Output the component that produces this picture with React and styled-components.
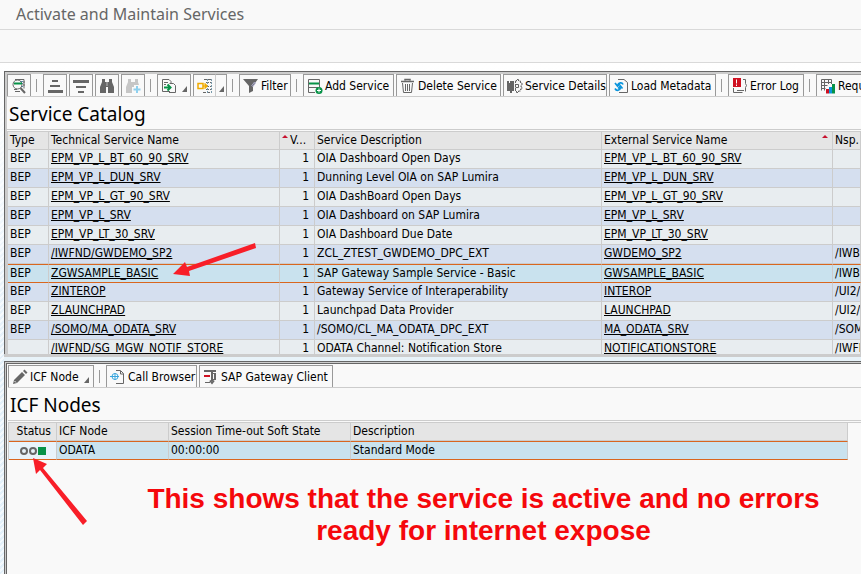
import React from "react";
import styled, { createGlobalStyle } from "styled-components";

const Global = createGlobalStyle`
  * { box-sizing: border-box; }
  body {
    margin: 0;
    background: #f9f9f9;
    color: #000;
    font-family: Tahoma, "DejaVu Sans Condensed", "Noto Sans", sans-serif;
    font-size: 12px;
    line-height: 18px;
    overflow: hidden;
  }
`;

const headingFont = `Tahoma, "Noto Sans", sans-serif`;

const Page = styled.div`
  min-height: 100vh;
  display: flex;
  flex-direction: column;
  overflow: hidden;
`;

const TitleBar = styled.header`
  height: 30px;
  padding: 0 16px;
  border-bottom: 1px solid #d9d9d9;
  h1 {
    margin: 0;
    font: 400 16px/29px ${headingFont};
    color: #666;
    white-space: nowrap;
  }
`;

const CommandBar = styled.div`
  height: 33px;
  border-bottom: 1px solid #d9d9d9;
`;

const Workspace = styled.main`
  flex: 1;
  display: flex;
  flex-direction: column;
  padding: 8px 0 0 4px;
  background:
    linear-gradient(#fff, rgba(255, 255, 255, 0) 300px),
    repeating-linear-gradient(135deg, #e3f0f9 0 2px, #f4f9fd 2px 4px);
`;

const Panel = styled.section`
  position: relative;
  border: solid #666;
  border-width: 1px 0 0 1px;
  box-shadow: inset 2px 2px 0 #ccc;
  background: #f9f9f9;
  padding: 2px 0 0 2px;
  flex: ${(p) => (p.$grow ? 1 : "none")};
  ${(p) => p.$grow && "box-shadow: inset 1px 1px 0 #ccc, inset 2px 2px 0 #666; padding: 3px 0 0 3px;"}
`;

const Splitter = styled.div`
  height: 7px;
  border-top: 3px solid #ccc;
  background: #e8f3f9;
`;

const Toolbar = styled.div`
  display: flex;
  gap: 2px;
  height: 23px;
  border-bottom: 1px solid #ccc;
  overflow: hidden;
`;

const Tool = styled.button`
  flex: none;
  display: flex;
  align-items: center;
  gap: 2px;
  width: ${(p) => (p.$w ? p.$w + "px" : "auto")};
  height: 23px;
  margin: 0;
  padding: 0 3px;
  border: 1px solid #999;
  background: #f9f9f9;
  color: #000;
  font: inherit;
  white-space: nowrap;
  justify-content: ${(p) => (p.$icon ? "center" : "flex-start")};
  svg { flex: none; }
`;

const SplitTool = styled.div`
  display: flex;
  flex: none;
  ${Tool} + ${Tool} { border-left-color: #ccc; margin-left: -1px; }
`;

const Separator = styled.span`
  flex: none;
  width: 1px;
  height: 13px;
  margin: 5px 4px 0 3px;
  background: #999;
`;

const Corner = styled.span`
  align-self: flex-end;
  width: 0;
  height: 0;
  margin: 0 0 4px ${(p) => (p.$spaced ? 3 : 0)}px;
  border-left: 5px solid transparent;
  border-bottom: 6px solid #666;
`;

const PanelTitle = styled.h2`
  margin: 0;
  height: 33px;
  padding-left: 2px;
  font: 400 19px/34px ${headingFont};
  border-bottom: 1px solid #ccc;
  white-space: nowrap;
`;

const TableArea = styled.div`
  margin-top: 1px;
  border-top: 1px solid #ccc;
  overflow: hidden;
  height: ${(p) => (p.$clip ? "223px" : "auto")};
`;

const Table = styled.table`
  width: 100%;
  table-layout: fixed;
  border-collapse: separate;
  border-spacing: 0;
  border-left: 1px solid #ccc;
`;

const Col = styled.col`
  width: ${(p) => (p.$w ? p.$w + "px" : "auto")};
`;

const Th = styled.th`
  height: 18px;
  padding: 0 ${(p) => (p.$align === "right" ? 5 : 2)}px 0 2px;
  background: #e5e5e5;
  border-right: 1px solid #ccc;
  border-bottom: 1px solid #ccc;
  font-weight: 400;
  line-height: 17px;
  text-align: ${(p) => p.$align || "left"};
  white-space: nowrap;
  overflow: hidden;
`;

const HeadLine = styled.span`
  display: flex;
  justify-content: ${(p) => (p.$end ? "space-between" : "flex-start")};
`;

const SortMark = styled.i`
  width: 0;
  height: 0;
  margin: 3px 2px 0 0;
  border: 3px solid transparent;
  border-top: 0;
  border-bottom: 3px solid #c8102e;
`;

const Row = styled.tr`
  background: ${(p) => (p.$selected ? "#c9e2ee" : p.$odd ? "#d5dfef" : "#e8edf0")};
`;

const Td = styled.td`
  height: 19px;
  padding: 0 ${(p) => (p.$align === "right" ? 5 : 2)}px 0 2px;
  border-right: 1px solid #ccc;
  border-bottom: 1px solid ${(p) => (p.$selected ? "#d9661f" : "#ccc")};
  border-top: ${(p) => (p.$selected ? "1px solid #d9661f" : "none")};
  line-height: 16px;
  vertical-align: top;
  text-align: ${(p) => p.$align || "left"};
  white-space: nowrap;
  overflow: hidden;
`;

const ServiceLink = styled.a`
  color: inherit;
  text-decoration: underline;
  text-underline-offset: 1px;
  text-decoration-thickness: 1px;
  text-decoration-skip-ink: none;
`;

const NodeArea = styled.div`
  padding-right: 13px;
`;

const StatusCell = styled(Td)`
  background: #e8f3fa;
  svg { display: block; margin: 4px auto 0; }
`;

const Pointer = styled.svg`
  position: absolute;
  left: ${(p) => p.$x}px;
  top: ${(p) => p.$y}px;
  fill: #f81e28;
`;

const Remark = styled.p`
  margin: 23px 0 0;
  padding-left: 98px;
  color: #f5080c;
  font: bold 28px/32px "Liberation Sans", Arial, sans-serif;
  text-align: center;
`;

const G = "#666";
const Icon = ({ children, w = 16 }) => (
  <svg width={w} height="16" viewBox={`0 0 ${w} 16`} fill="none" stroke={G} aria-hidden="true">
    {children}
  </svg>
);

const DetailIcon = () => (
  <Icon>
    <path d="M4 1.500h9v9M12 4h2M12 7h2M4 13.500h5M3 11.500h3" />
    <path d="M9 3.500h3M10 5.500h2M10 8.500h2" stroke="#58a" />
    <circle cx="6.500" cy="6.500" r="4.500" />
    <path d="M3 5.500h8" stroke="#079247" strokeWidth="2" />
    <path d="M9.500 10l4.500 5" strokeWidth="2" />
  </Icon>
);
const AscIcon = () => (
  <Icon>
    <path d="M5 3h6M3 8h10" strokeWidth="2" />
    <path d="M1 13.500h15" strokeWidth="3" />
  </Icon>
);
const DescIcon = () => (
  <Icon>
    <path d="M0 3.500h16" strokeWidth="3" />
    <path d="M3 9h10M5 14h6" strokeWidth="2" />
  </Icon>
);
const binocular = "M3 1h3v3h4V1h3v3l2 5v6H9V9H7v6H1V9l2-5z";
const FindIcon = () => <Icon><path d={binocular} fill={G} stroke="none" /><path d="M8 4v4" stroke="#bbb" /></Icon>;
const FindNextIcon = () => (
  <Icon>
    <path d="M3 1h3v3h4V1h3v3l1 3H9v2H7v6H1V9l2-5z" fill="#c6c6c6" stroke="none" />
    <path d="M12 8v7M8.500 11.500h7" stroke="#8fd0ee" strokeWidth="2" />
  </Icon>
);
const ExportIcon = () => (
  <Icon>
    <path d="M9 13.500H1.500V1.500H8l2 2v2M3 4.500h4M3 6.500h2M8.500 5.500h4l2 2v7H8" />
    <path d="M3 9.500h6M6.500 6.500l3 3-3 3" stroke="#079247" strokeWidth="2" />
  </Icon>
);
const LayoutIcon = () => (
  <Icon>
    <path d="M7 1.500h8M9 4.500h6M9 8.500h6M9 11.500h6M6 14.500h9" strokeDasharray="3 1" />
    <path d="M10.500 1v14M14.500 1v14" stroke="#79a" strokeDasharray="2 1" />
    <path d="M1 5.500h5v5H1zM6 8h3M7.500 5.500L10 8l-2.500 2.500" stroke="#f0ab00" strokeWidth="1.500" />
  </Icon>
);
const FilterIcon = () => (
  <Icon>
    <path d="M0 1h15L10 8v5l-4 2V8z" fill={G} stroke="none" />
    <path d="M8.500 8l3-4 1 1-3 4" stroke="#aac" />
  </Icon>
);
const AddIcon = () => (
  <Icon>
    <path d="M8 14.500H1.500V1.500h11V9M2 9.500h9" />
    <path d="M2 5.500h10" stroke="#079247" strokeWidth="2" />
    <circle cx="12" cy="12.500" r="3.500" fill="#079247" stroke="none" />
    <path d="M12 10.500v4M10 12.500h4" stroke="#fff" />
  </Icon>
);
const TrashIcon = () => (
  <Icon>
    <path d="M1 3.500h13M5 2.500V1.500h5v1" strokeWidth="1.500" />
    <path d="M2.500 5l1 9.500h8l1-9.500" /><path d="M5.500 6v7M7.500 6v7M9.500 6v7" />
  </Icon>
);
const ServiceIcon = () => (
  <Icon>
    <path d="M0 3h2v2h1V3h4v10H5v2H3v-2H0z" fill={G} stroke="none" />
    <path d="M8.500 4V3h1V1.500h2V3h2v2h1.500v2h-1v2h1v2h-1.500v2h-2v1.500h-2V13H8.500z" strokeDasharray="3 1" />
    <path d="M8.500 6.500h3v3h-3" />
  </Icon>
);
const RefreshIcon = () => (
  <Icon>
    <path d="M5 1.500h6l3.500 3v10H6" />
    <path d="M10 6.500C9 4 5.500 4.500 4.500 7.500M2 5l2.500 3L7 6M2 10.500c1.500 3 5 2 5.500-1M5 10.500L7.500 8l2 2.500" stroke="#0a94dc" strokeWidth="1.700" />
  </Icon>
);
const ErrorIcon = () => (
  <Icon>
    <path d="M1.500 10v4.500h9M11 1.500h2.500v4M13.500 5.500l1 2-1 2v4M5 12.500h7" />
    <path d="M1 0h8v9H1z" fill="#cf1020" stroke="none" />
    <path d="M4.500 1.500v4M4.500 6.500V8" stroke="#fff" />
  </Icon>
);
const StatsIcon = () => (
  <Icon>
    <path d="M1.500 12.500v-11h10V6M1.500 4.500h10M1.500 7.500h6M1.500 10.500h4M4.500 1.500v11M8.500 1.500V6" />
    <path d="M7.500 15.500V11" stroke="#cf1020" strokeWidth="3" />
    <path d="M10.500 15.500V9" stroke="#0a94dc" strokeWidth="3" />
    <path d="M13.500 15.500V6" stroke="#079247" strokeWidth="3" />
  </Icon>
);
const PencilIcon = () => (
  <Icon>
    <path d="M1 15l1-4 8-8 3 3-8 8zM11 2l1.500-1.500 3 3L14 5z" fill={G} stroke="none" />
    <path d="M2.500 12l1.500 1.500" stroke="#f9f9f9" />
  </Icon>
);
const BrowserIcon = () => (
  <Icon>
    <path d="M6 1.500h4.500l3 3v10H6M10.500 2v3h3" />
    <circle cx="5" cy="7.500" r="3" stroke="#3aa6dd" fill="#fff" />
    <path d="M0 7.500h9M5 4v7" stroke="#3aa6dd" />
  </Icon>
);
const GatewayIcon = () => (
  <Icon>
    <path d="M1 2h12M9 3v9M12 5v6M7 11.500l2 2.500 2-2.500" strokeWidth="2" />
    <path d="M2 13.500h5M9 4.500h4M9 10.500h4" />
    <path d="M1 7h6" stroke="#cf1020" strokeWidth="2" />
  </Icon>
);

const services = [
  ["BEP", "EPM_VP_L_BT_60_90_SRV", "OIA Dashboard Open Days", "EPM_VP_L_BT_60_90_SRV", ""],
  ["BEP", "EPM_VP_L_DUN_SRV", "Dunning Level OIA on SAP Lumira", "EPM_VP_L_DUN_SRV", ""],
  ["BEP", "EPM_VP_L_GT_90_SRV", "OIA DashBoard Open Days", "EPM_VP_L_GT_90_SRV", ""],
  ["BEP", "EPM_VP_L_SRV", "OIA Dashboard on SAP Lumira", "EPM_VP_L_SRV", ""],
  ["BEP", "EPM_VP_LT_30_SRV", "OIA Dashboard Due Date", "EPM_VP_LT_30_SRV", ""],
  ["BEP", "/IWFND/GWDEMO_SP2", "ZCL_ZTEST_GWDEMO_DPC_EXT", "GWDEMO_SP2", "/IWBEP/"],
  ["BEP", "ZGWSAMPLE_BASIC", "SAP Gateway Sample Service - Basic", "GWSAMPLE_BASIC", "/IWBEP/"],
  ["BEP", "ZINTEROP", "Gateway Service of Interaperability", "INTEROP", "/UI2/"],
  ["BEP", "ZLAUNCHPAD", "Launchpad Data Provider", "LAUNCHPAD", "/UI2/"],
  ["BEP", "/SOMO/MA_ODATA_SRV", "/SOMO/CL_MA_ODATA_DPC_EXT", "MA_ODATA_SRV", "/SOMO/"],
  ["", "/IWFND/SG_MGW_NOTIF_STORE", "ODATA Channel: Notification Store", "NOTIFICATIONSTORE", "/IWFND/"],
];
const SELECTED = 6;
const shaded = [1, 3, 5, 7, 9];

const IconTool = ({ label, children }) => (
  <Tool type="button" $icon $w={24} aria-label={label}>{children}</Tool>
);

const TextTool = ({ icon, label, w, menu }) => (
  <Tool type="button" $w={w}>
    {icon}
    {label}
    {menu && <Corner $spaced />}
  </Tool>
);

function Catalog() {
  return (
    <Panel>
      <Toolbar role="toolbar" aria-label="Service Catalog">
        <IconTool label="Details"><DetailIcon /></IconTool>
        <Separator />
        <IconTool label="Sort ascending"><AscIcon /></IconTool>
        <IconTool label="Sort descending"><DescIcon /></IconTool>
        <IconTool label="Find"><FindIcon /></IconTool>
        <IconTool label="Find next"><FindNextIcon /></IconTool>
        <Separator />
        <Tool type="button" $w={34} aria-label="Export"><ExportIcon /><Corner $spaced /></Tool>
        <SplitTool>
          <Tool type="button" $w={23} aria-label="Layout"><LayoutIcon /></Tool>
          <Tool type="button" $w={12} aria-label="Layout menu"><Corner /></Tool>
        </SplitTool>
        <Separator />
        <TextTool icon={<FilterIcon />} label="Filter" w={52} />
        <Separator />
        <TextTool icon={<AddIcon />} label="Add Service" w={91} />
        <TextTool icon={<TrashIcon />} label="Delete Service" w={105} />
        <TextTool icon={<ServiceIcon />} label="Service Details" w={104} />
        <TextTool icon={<RefreshIcon />} label="Load Metadata" w={107} />
        <Separator />
        <TextTool icon={<ErrorIcon />} label="Error Log" w={76} />
        <Separator />
        <TextTool icon={<StatsIcon />} label="Request Statistics" w={130} />
      </Toolbar>
      <PanelTitle>Service Catalog</PanelTitle>
      <TableArea $clip>
        <Table>
          <colgroup>
            <Col $w={41} /><Col $w={231} /><Col $w={35} /><Col $w={287} /><Col $w={231} /><Col />
          </colgroup>
          <thead>
            <tr>
              <Th>Type</Th>
              <Th>Technical Service Name</Th>
              <Th><HeadLine><SortMark />V...</HeadLine></Th>
              <Th>Service Description</Th>
              <Th><HeadLine $end>External Service Name<SortMark /></HeadLine></Th>
              <Th>Nsp.</Th>
            </tr>
          </thead>
          <tbody>
            {services.map(([type, name, text, ext, nsp], i) => {
              const selected = i === SELECTED;
              return (
                <Row key={name} $odd={shaded.includes(i)} $selected={selected}>
                  <Td $selected={selected}>{type}</Td>
                  <Td $selected={selected}><ServiceLink href="#service">{name}</ServiceLink></Td>
                  <Td $selected={selected} $align="right">1</Td>
                  <Td $selected={selected}>{text}</Td>
                  <Td $selected={selected}><ServiceLink href="#external">{ext}</ServiceLink></Td>
                  <Td $selected={selected}>{nsp}</Td>
                </Row>
              );
            })}
          </tbody>
        </Table>
      </TableArea>
      <Pointer $x={168} $y={171} width="84" height="34" viewBox="0 0 84 34" aria-hidden="true">
        <path d="M0 31L12 19l2 5L82 0l1 5L16 28l1 5z" />
      </Pointer>
    </Panel>
  );
}

function Nodes() {
  return (
    <Panel $grow>
      <Toolbar role="toolbar" aria-label="ICF Nodes">
        <TextTool icon={<PencilIcon />} label="ICF Node" w={86} menu />
        <Separator />
        <TextTool icon={<BrowserIcon />} label="Call Browser" w={91} />
        <TextTool icon={<GatewayIcon />} label="SAP Gateway Client" w={134} />
      </Toolbar>
      <PanelTitle>ICF Nodes</PanelTitle>
      <TableArea>
        <NodeArea>
          <Table>
            <colgroup><Col $w={48} /><Col $w={112} /><Col $w={182} /><Col /></colgroup>
            <thead>
              <tr>
                <Th $align="right">Status</Th>
                <Th>ICF Node</Th>
                <Th>Session Time-out Soft State</Th>
                <Th>Description</Th>
              </tr>
            </thead>
            <tbody>
              <Row $selected>
                <StatusCell $selected>
                  <svg width="26" height="10" viewBox="0 0 26 10" role="img" aria-label="Active">
                    <circle cx="4" cy="5" r="3" fill="none" stroke={G} strokeWidth="2" />
                    <circle cx="13" cy="5" r="3" fill="none" stroke={G} strokeWidth="2" />
                    <rect x="18" y="1" width="8" height="8" fill="#079247" />
                  </svg>
                </StatusCell>
                <Td $selected>ODATA</Td>
                <Td $selected>00:00:00</Td>
                <Td $selected>Standard Mode</Td>
              </Row>
            </tbody>
          </Table>
        </NodeArea>
      </TableArea>
      <Remark>
        This shows that the service is active and no errors
        <br />
        ready for internet expose
      </Remark>
      <Pointer $x={28} $y={96} width="56" height="68" viewBox="0 0 56 68" aria-hidden="true">
        <path d="M0 0l14 6-4 4 44 53-4 4L7 12l-4 4z" />
      </Pointer>
    </Panel>
  );
}

export default function App() {
  return (
    <Page>
      <Global />
      <TitleBar><h1>Activate and Maintain Services</h1></TitleBar>
      <CommandBar />
      <Workspace>
        <Catalog />
        <Splitter />
        <Nodes />
      </Workspace>
    </Page>
  );
}
